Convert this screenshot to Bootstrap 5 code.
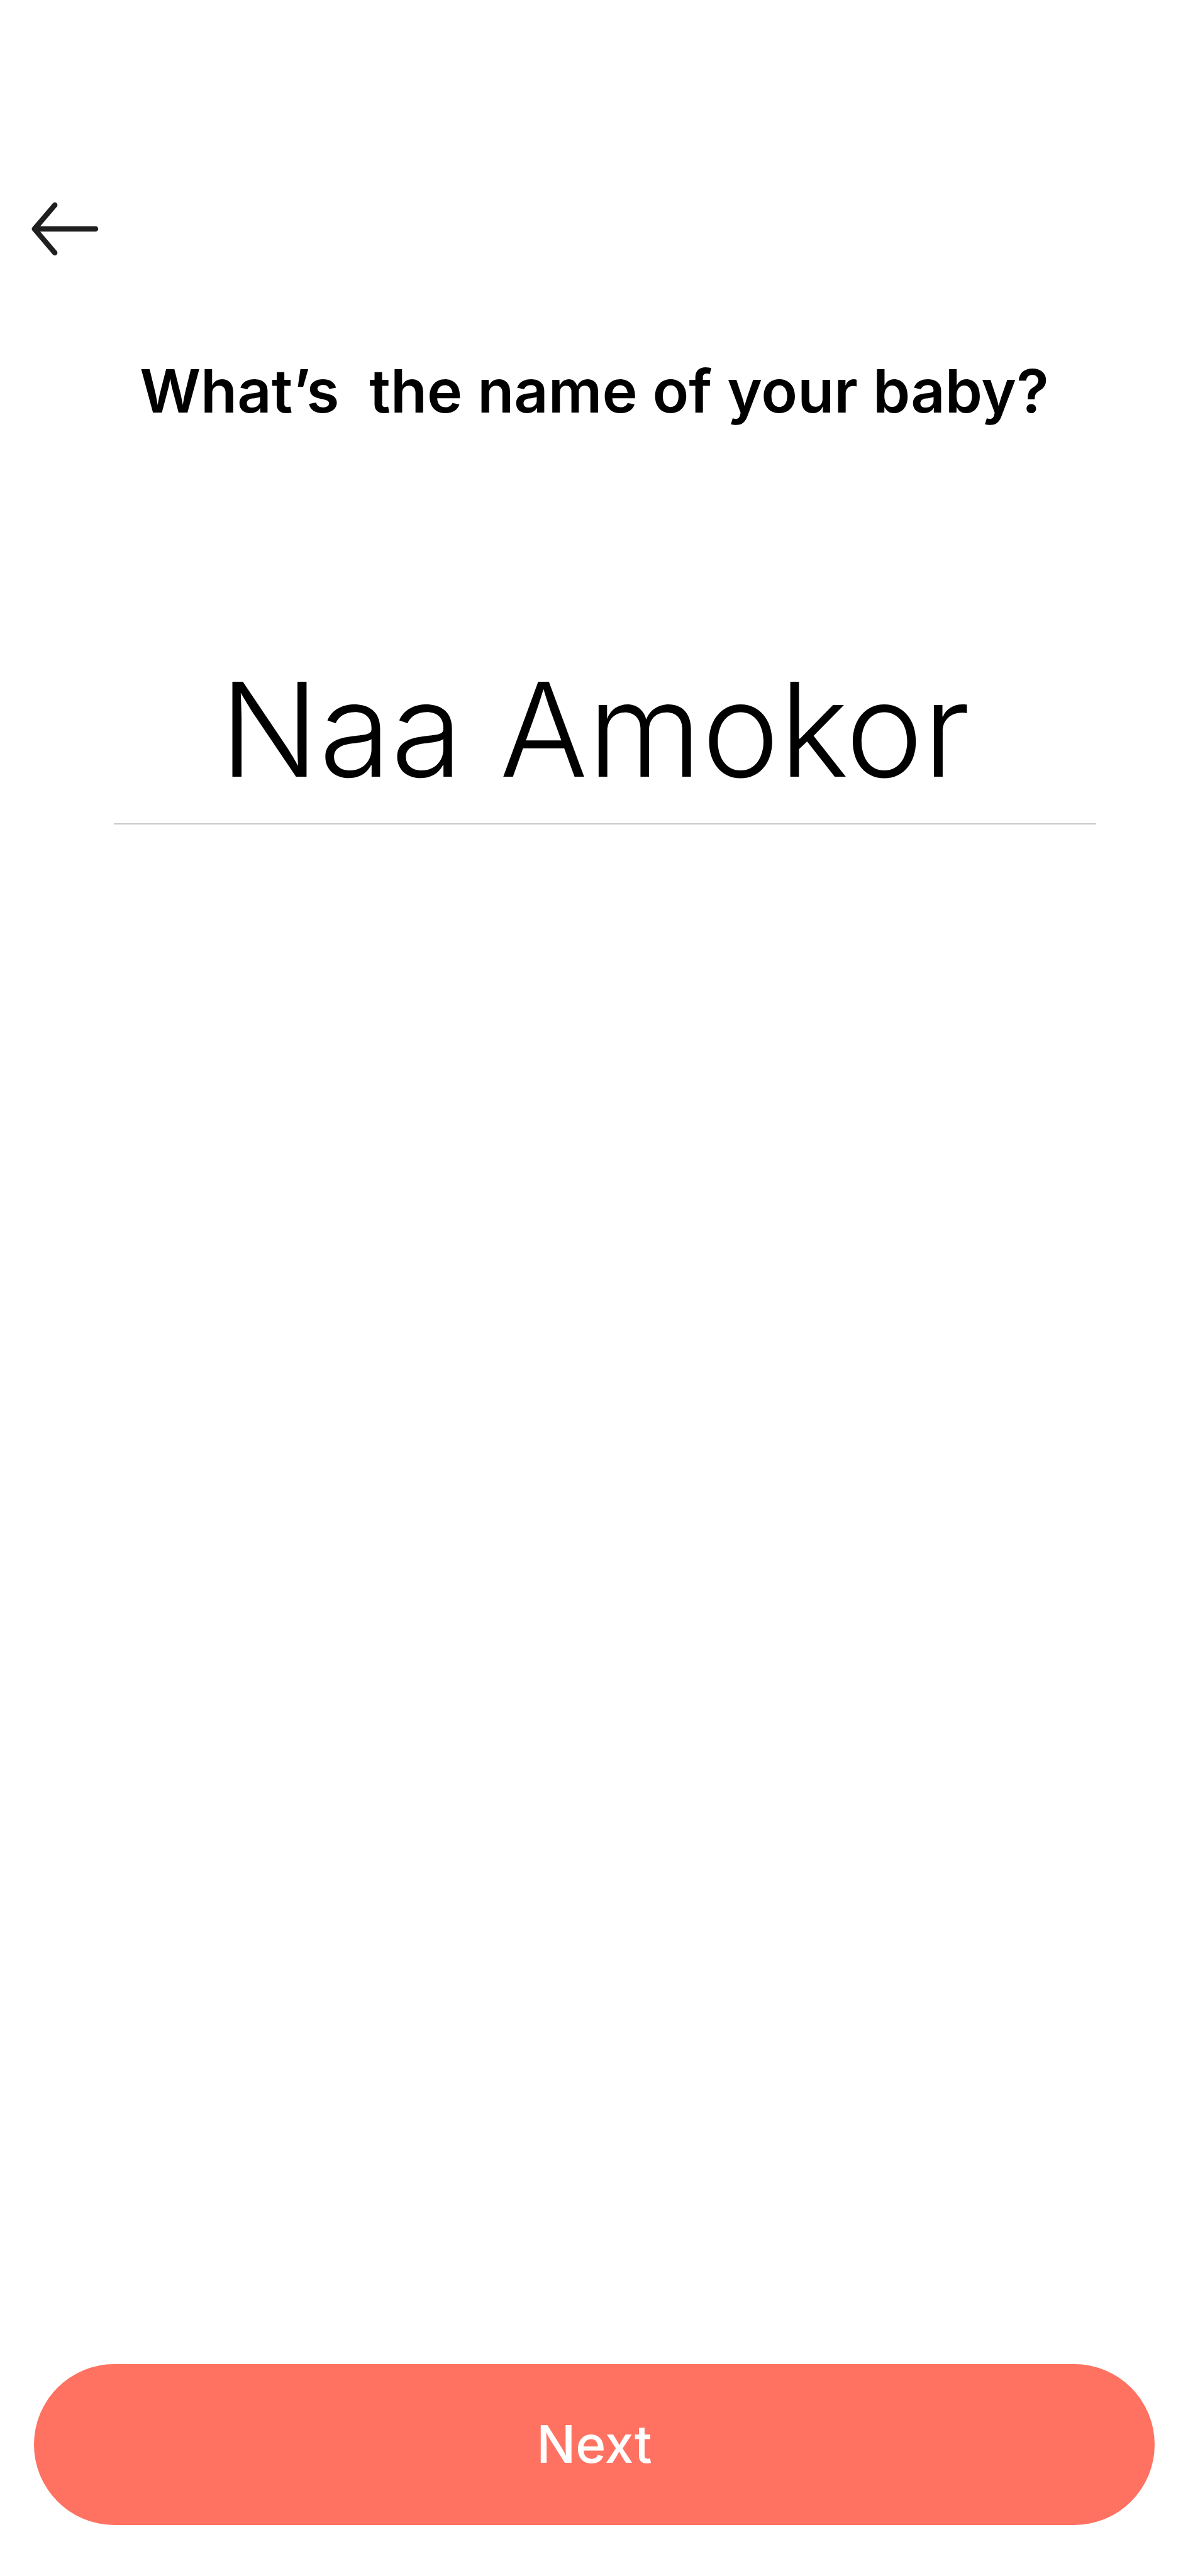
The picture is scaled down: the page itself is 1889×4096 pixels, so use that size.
<!DOCTYPE html>
<html lang="en">
<head>
<meta charset="utf-8">
<meta name="viewport" content="width=device-width, initial-scale=1">
<title>Baby name</title>
<link href="https://cdn.jsdelivr.net/npm/bootstrap@5.3.0/dist/css/bootstrap.min.css" rel="stylesheet">
<style>
  body { font-family: Inter, "Open Sans", sans-serif; color: #000; background: #fff; }
  .screen { padding: 320px 53px 81px 54px; }
  .back-link { color: #1f1f1f; margin-left: -6px; }
  .question { font-size: 95px; line-height: 108px; font-weight: 600; margin-top: 160px; white-space: pre-wrap; }
  .name-form { margin: 355px 93px 0 127px; }
  .name-field, .name-field:focus {
    font-size: 208px; line-height: 256px; font-weight: 300; color: #000;
    padding: 0 32px 22px 0; border-bottom: 2px solid #c8c8c8 !important;
    background: transparent; box-shadow: none;
  }
  .next-btn {
    --bs-btn-bg: #ff7262; --bs-btn-color: #fff; --bs-btn-border-width: 0;
    --bs-btn-hover-bg: #f2604f; --bs-btn-hover-color: #fff;
    --bs-btn-active-bg: #e65443; --bs-btn-active-color: #fff;
    font-size: 82px; line-height: 96px; font-weight: 500; padding: 80px;
  }
</style>
</head>
<body>
<main class="screen d-flex flex-column min-vh-100">
  <nav class="d-flex">
    <a href="#" class="back-link d-block" aria-label="Back">
      <svg class="d-block" width="112" height="88" viewBox="0 0 112 88" fill="none" stroke="currentColor" stroke-width="8.4" stroke-linecap="round" stroke-linejoin="round" aria-hidden="true">
        <path d="M39.2 6 6.8 44l32.4 38M6.8 44H104"/>
      </svg>
    </a>
  </nav>
  <h1 class="question text-center mb-0"><label for="babyName">What’s  the name of your baby?</label></h1>
  <form class="name-form" id="nameForm">
    <input type="text" id="babyName" class="name-field form-control border-0 rounded-0 text-center" value="Naa Amokor" autocomplete="off">
  </form>
  <button type="submit" form="nameForm" class="next-btn btn rounded-pill w-100 mt-auto">Next</button>
</main>
<script src="https://cdn.jsdelivr.net/npm/bootstrap@5.3.0/dist/js/bootstrap.bundle.min.js"></script>
</body>
</html>
